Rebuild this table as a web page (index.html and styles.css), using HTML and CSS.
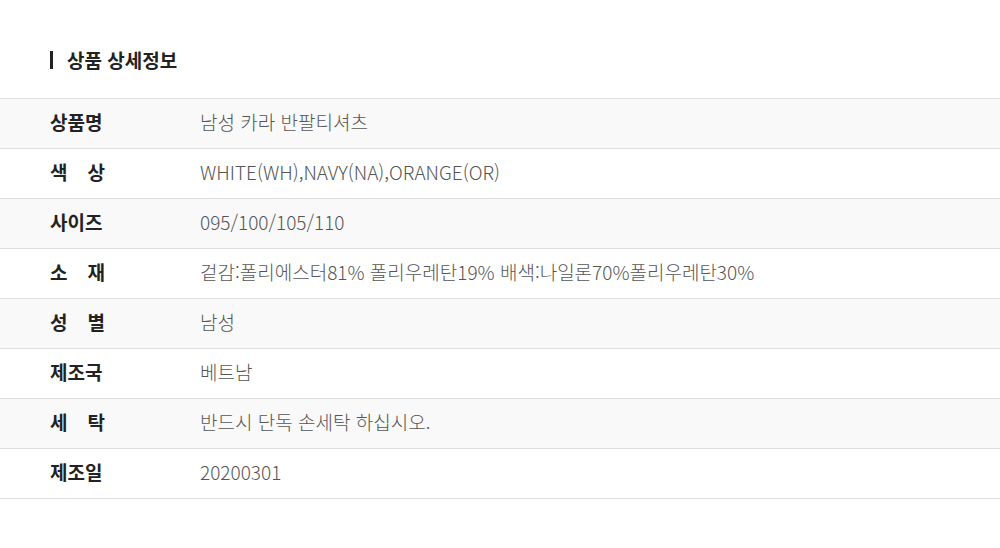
FILE: index.html
```html
<!doctype html>
<html lang="ko">
<head>
<meta charset="utf-8">
<title>상품 상세정보</title>
<link rel="stylesheet" href="styles.css">
</head>
<body>

<section class="detail">
  <h3 class="detail-title">상품 상세정보</h3>

  <table class="spec">
    <tr><th><span>상품명</span></th><td>남성 카라 반팔티셔츠</td></tr>
    <tr><th><span>색 상</span></th><td>WHITE(WH),NAVY(NA),ORANGE(OR)</td></tr>
    <tr><th><span>사이즈</span></th><td>095/100/105/110</td></tr>
    <tr><th><span>소 재</span></th><td>겉감:폴리에스터81% 폴리우레탄19% 배색:나일론70%폴리우레탄30%</td></tr>
    <tr><th><span>성 별</span></th><td>남성</td></tr>
    <tr><th><span>제조국</span></th><td>베트남</td></tr>
    <tr><th><span>세 탁</span></th><td>반드시 단독 손세탁 하십시오.</td></tr>
    <tr><th><span>제조일</span></th><td>20200301</td></tr>
  </table>
</section>

</body>
</html>
```

FILE: styles.css
```css
*{box-sizing:border-box;margin:0;padding:0}
body{
  font-family:"Noto Sans CJK KR","Noto Sans",sans-serif;background:#fff;color:#222;
}
.detail{padding-top:51px}
.detail-title{
  margin-left:50px;padding-left:14px;border-left:3px solid #222;
  font-size:19px;font-weight:700;line-height:18px;height:18px;margin-bottom:29px;
  display:flex;align-items:center
}
.spec{width:100%;border-collapse:collapse;border-top:1px solid #ddd}
.spec tr{height:50px;border-bottom:1px solid #ddd}
.spec tr:nth-child(odd){background:#f9f9f9}
.spec th,.spec td{padding-bottom:4px}
.spec th{
  width:200px;padding-left:50px;text-align:left;font-size:19px;font-weight:700;color:#222
}
.spec th span{display:block;width:55px;text-align:justify;text-align-last:justify}
.spec td{font-size:19px;font-weight:300;color:#555}
```
